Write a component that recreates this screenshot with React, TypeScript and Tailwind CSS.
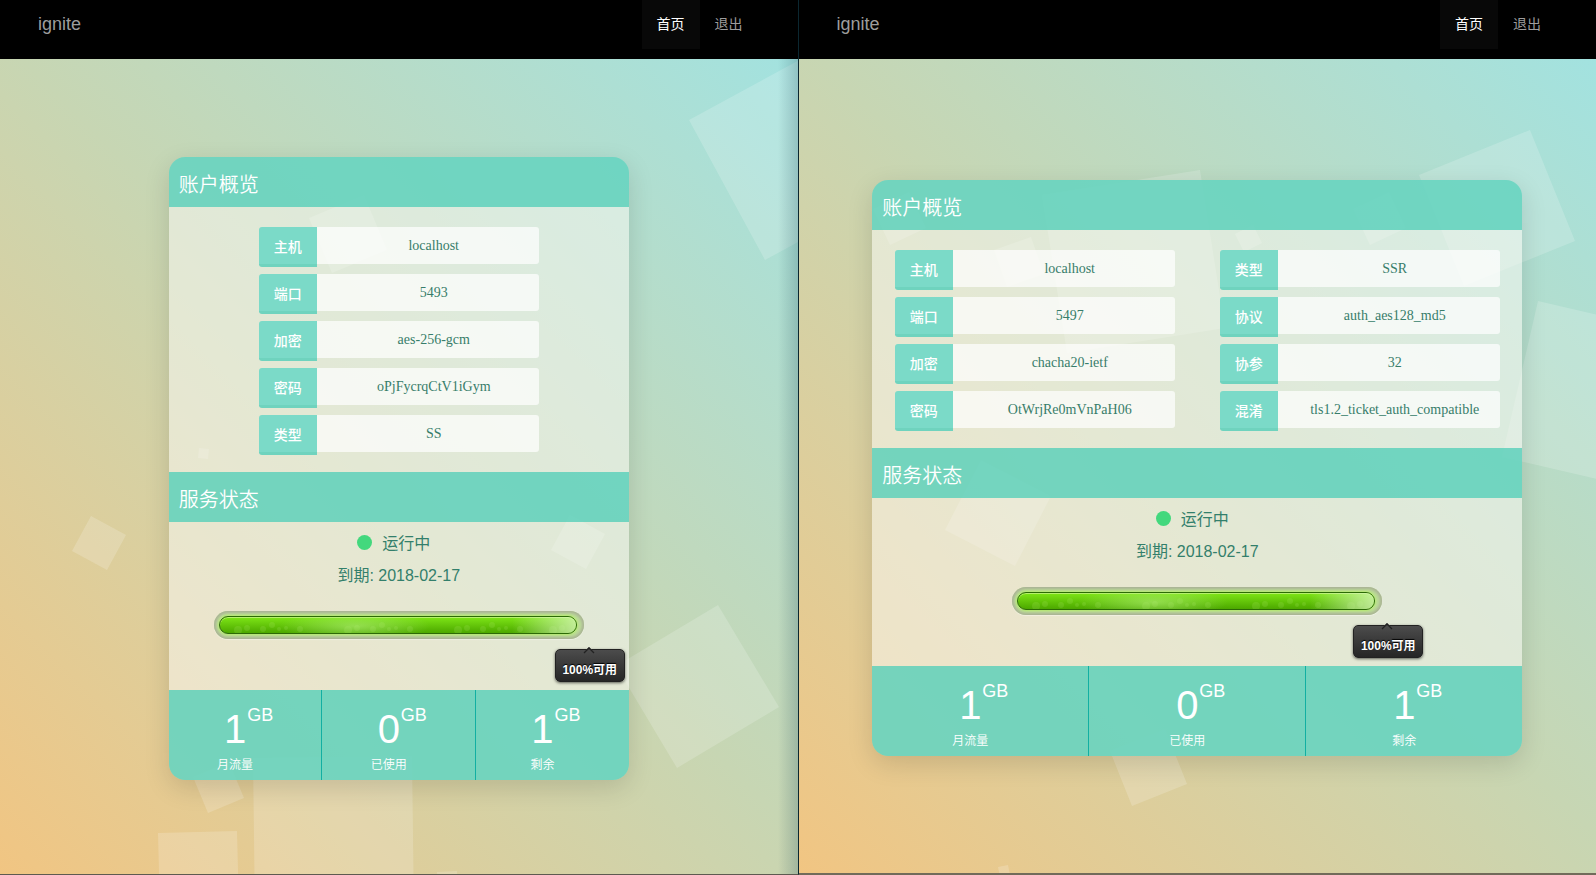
import React from "react";

type Point = [number, number];
type Field = { label: string; value: string };

const sans = "font-['Liberation_Sans','Noto_Sans_CJK_SC',sans-serif]";

function square([x1, y1]: Point, [x2, y2]: Point): string {
  const dx = x2 - x1;
  const dy = y2 - y1;
  return `${x1},${y1} ${x2},${y2} ${x2 - dy},${y2 + dx} ${x1 - dy},${y1 + dx}`;
}

function Squares({ items }: { items: [Point, Point][] }) {
  return (
    <svg className="pointer-events-none absolute inset-0 h-full w-full" aria-hidden="true">
      {items.map(([a, b], i) => (
        <polygon key={i} points={square(a, b)} fill="white" fillOpacity="0.18" />
      ))}
    </svg>
  );
}

function Navbar() {
  return (
    <nav className="relative z-10 flex h-[59px] items-start justify-between bg-black pr-10 pl-[38px]">
      <a href="#" className="text-lg leading-[48px] text-[#9d9d9d]">ignite</a>
      <div className="flex text-sm leading-[49px]">
        <a href="#" className="bg-[#080808] px-[15px] text-white">首页</a>
        <a href="#" className="px-[15px] text-[#9d9d9d]">退出</a>
      </div>
    </nav>
  );
}

function Heading({ children }: { children: React.ReactNode }) {
  return (
    <h2 className="h-[50px] bg-[#68d4c0]/90 pl-2.5 text-xl leading-[56px] font-[350] text-white">{children}</h2>
  );
}

function FieldRow({ label, value }: Field) {
  return (
    <div className="flex h-10 w-[280px] items-start">
      <dt className="h-10 w-[58px] rounded-l-[3px] border-b-[3px] border-[#6fd3be] bg-[#7bdac8] text-center text-sm leading-[41px] font-medium text-white">
        {label}
      </dt>
      <dd className="h-[37px] flex-1 rounded-r-[3px] bg-white/70 pl-3 text-center font-['Liberation_Serif',serif] text-sm leading-[37px] text-[#377d6a]">
        {value}
      </dd>
    </div>
  );
}

const bubbles: [number, number, number][] = [
  [18, 13, 4], [27, 11, 3], [43, 12, 3], [52, 8, 3], [59, 12, 2], [66, 11, 2], [80, 12, 3],
];

function Progress() {
  return (
    <div
      role="progressbar"
      aria-label="可用流量"
      aria-valuenow={100}
      className="h-7 w-[370px] rounded-full bg-[#bcdc98] p-[5px] shadow-[inset_0_0_3px_2px_#a9b195,0_1px_1px_rgba(255,255,255,0.4)]"
    >
      <div className="relative h-[18px] w-[358px] overflow-hidden rounded-full border border-[#2c6a06] bg-linear-to-b from-[#7ee616] to-[#4ca800] shadow-[0_0_2px_1px_#b5ea70,inset_0_1px_0_#b6f06c]">
        <svg className="absolute inset-0 h-full w-full" aria-hidden="true">
          <defs>
            <radialGradient id="glow">
              <stop offset="0" stopColor="#b4ef7c" stopOpacity="0.6" />
              <stop offset="1" stopColor="#b4ef7c" stopOpacity="0" />
            </radialGradient>
            <linearGradient id="tip">
              <stop offset="0" stopColor="#d5f5b5" stopOpacity="0" />
              <stop offset="1" stopColor="#d5f5b5" stopOpacity="0.85" />
            </linearGradient>
          </defs>
          <ellipse cx="135" cy="9" rx="75" ry="16" fill="url(#glow)" />
          {[0, 110, 220, 315].map((offset) =>
            bubbles.map(([x, y, r]) => (
              <circle key={`${offset}-${x}`} cx={offset + x} cy={y} r={r} fill="#b9f07e" fillOpacity="0.16" />
            )),
          )}
          <rect x="292" width="66" height="18" fill="url(#tip)" />
        </svg>
      </div>
    </div>
  );
}

function Tooltip({ alignment }: { alignment: string }) {
  return (
    <div className={`absolute top-[127px] h-[33px] w-[70px] rounded-[5px] border border-[#222] bg-linear-to-b from-[#4c4c4c] to-[#262626] text-center text-xs leading-[41px] font-bold text-white shadow-[0_1px_3px_rgba(0,0,0,0.6)] [text-shadow:0_-1px_1px_black] ${alignment}`}>
      <svg className="absolute -top-[3px] left-[27px] h-[8px] w-[12px]" aria-hidden="true">
        <path d="M3 3 L6 0 L9 3Z" fill="#464646" />
        <path d="M1 6 L6 1 L11 6" fill="none" stroke="#222" strokeWidth="1.3" />
      </svg>
      100%可用
    </div>
  );
}

function Stat({ value, label }: { value: string; label: string }) {
  return (
    <div className="flex-1 border-l border-[#12afa2] pt-2.5 text-center text-white first:border-l-0">
      <div className="flex h-14 justify-center pl-2">
        <span className="text-[40px] leading-[58px]">{value}</span>
        <span className="w-7 text-lg leading-[30px]">GB</span>
      </div>
      <div className="pr-5 text-xs leading-[18px] font-[350]">{label}</div>
    </div>
  );
}

function Card({ columns, width, tooltip }: { columns: Field[][]; width: string; tooltip: string }) {
  return (
    <main className={`relative overflow-hidden rounded-2xl shadow-[0_8px_26px_rgba(0,0,0,0.13)] ${width}`}>
      <Heading>账户概览</Heading>
      <div className="flex justify-around bg-[#f7f8f2]/55 pt-5 pb-[17px]">
        {columns.map((fields, i) => (
          <dl key={i} className="flex flex-col gap-[7px]">
            {fields.map((field) => (
              <FieldRow key={field.label} {...field} />
            ))}
          </dl>
        ))}
      </div>
      <Heading>服务状态</Heading>
      <div className="relative flex h-[168px] flex-col items-center bg-[#f7f8f2]/55 pt-1.5 text-base leading-8 text-[#337f6b]">
        <p className="flex items-center gap-2.5 pr-2.5">
          <span className="mb-1 size-[15px] rounded-full bg-[#43d87d]" />
          运行中
        </p>
        <p className="mb-[19px]">到期: 2018-02-17</p>
        <Progress />
        <Tooltip alignment={tooltip} />
      </div>
      <footer className="flex h-[90px] bg-[#68d4c0]/90">
        <Stat value="1" label="月流量" />
        <Stat value="0" label="已使用" />
        <Stat value="1" label="剩余" />
      </footer>
    </main>
  );
}

function Panel({ squares, edge, children }: { squares: [Point, Point][]; edge: string; children: React.ReactNode }) {
  return (
    <section className={`relative flex min-w-0 flex-1 flex-col overflow-hidden bg-linear-45 from-[#f1c582] via-[#c7d6b3] to-[#9fe3e3] ${edge}`}>
      <Squares items={squares} />
      <Navbar />
      <div className="flex flex-1 items-center justify-center pt-1">{children}</div>
    </section>
  );
}

const leftSquares: [Point, Point][] = [
  [[689, 120], [829, 44]],
  [[309, 218], [364, 195]],
  [[199, 448], [209, 449]],
  [[91, 516], [126, 535]],
  [[570, 515], [605, 534]],
  [[616, 666], [718, 605]],
  [[193, 777], [229, 762]],
  [[253, 758], [412, 756]],
  [[158, 833], [237, 831]],
  [[437, 872], [457, 871]],
];

const rightSquares: [Point, Point][] = [
  [[620, 175], [731, 130]],
  [[243, 195], [401, 170]],
  [[74, 209], [110, 192]],
  [[195, 250], [232, 237]],
  [[436, 234], [454, 225]],
  [[554, 209], [590, 192]],
  [[739, 301], [895, 337]],
  [[182, 460], [252, 496]],
  [[311, 751], [366, 729]],
  [[199, 867], [209, 865]],
];

const leftFields: Field[][] = [[
  { label: "主机", value: "localhost" },
  { label: "端口", value: "5493" },
  { label: "加密", value: "aes-256-gcm" },
  { label: "密码", value: "oPjFycrqCtV1iGym" },
  { label: "类型", value: "SS" },
]];

const rightFields: Field[][] = [
  [
    { label: "主机", value: "localhost" },
    { label: "端口", value: "5497" },
    { label: "加密", value: "chacha20-ietf" },
    { label: "密码", value: "OtWrjRe0mVnPaH06" },
  ],
  [
    { label: "类型", value: "SSR" },
    { label: "协议", value: "auth_aes128_md5" },
    { label: "协参", value: "32" },
    { label: "混淆", value: "tls1.2_ticket_auth_compatible" },
  ],
];

export default function App() {
  return (
    <div className={`flex min-h-screen ${sans}`}>
      <Panel squares={leftSquares} edge="border-r border-b border-r-[#0b2730] border-b-[#5d5a50]">
        <Card columns={leftFields} width="w-[460px]" tooltip="right-1" />
        <div className="absolute inset-y-0 right-0 w-5 bg-linear-to-r from-[#2c5560]/0 to-[#2c5560]/25" />
      </Panel>
      <Panel squares={rightSquares} edge="border-b-2 border-[#716b5a]">
        <Card columns={rightFields} width="w-[650px]" tooltip="right-[99px]" />
      </Panel>
    </div>
  );
}
